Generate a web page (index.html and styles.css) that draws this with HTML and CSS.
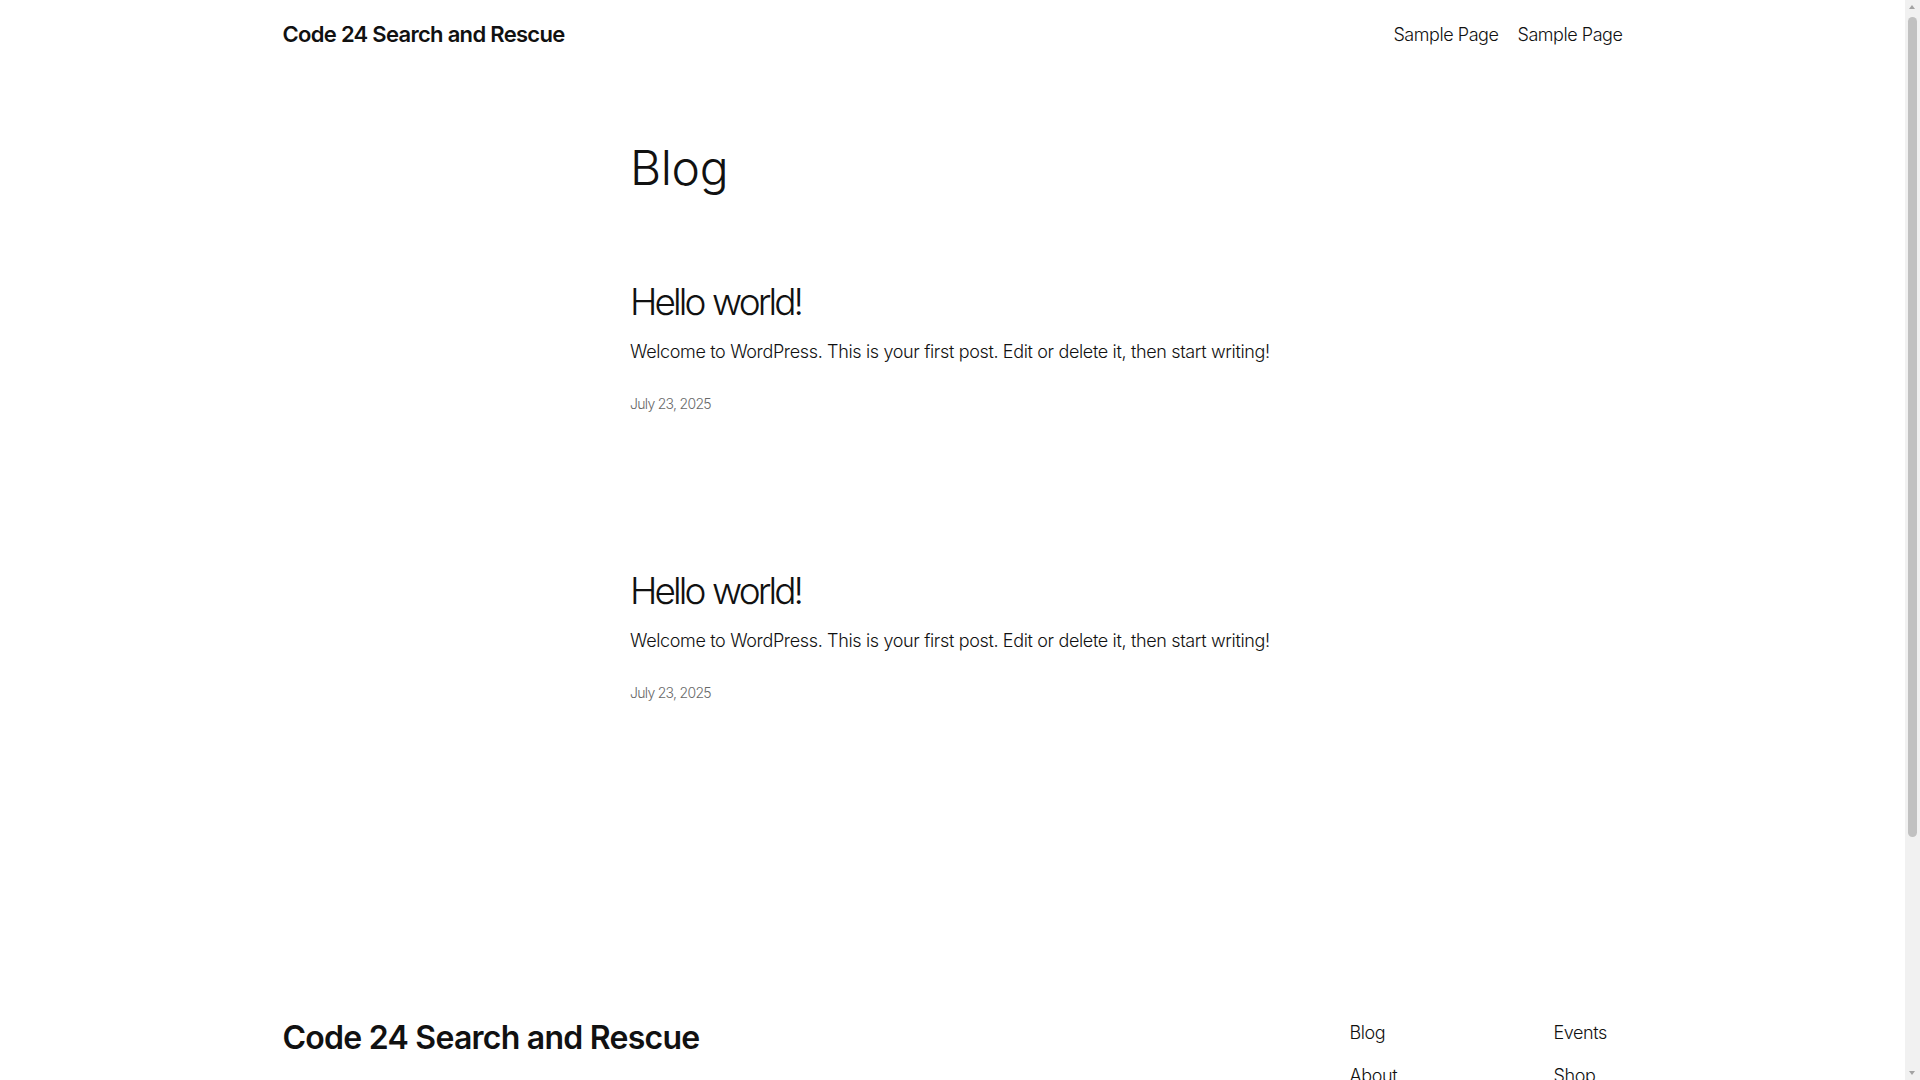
FILE: index.html
```html
<!DOCTYPE html>
<html lang="en">
<head>
<meta charset="utf-8">
<title>Blog – Code 24 Search and Rescue</title>
<link rel="stylesheet" href="styles.css">
</head>
<body>
<div class="page">
  <header class="site-header">
    <a class="site-title" href="#">Code 24 Search and Rescue</a>
    <nav class="site-nav">
      <a href="#">Sample Page</a>
      <a href="#">Sample Page</a>
    </nav>
  </header>

  <main class="content">
    <h1 class="page-title">Blog</h1>

    <article class="post">
      <h2 class="post-title"><a href="#">Hello world!</a></h2>
      <p class="post-excerpt">Welcome to WordPress. This is your first post. Edit or delete it, then start writing!</p>
      <time class="post-date">July 23, 2025</time>
    </article>

    <article class="post">
      <h2 class="post-title"><a href="#">Hello world!</a></h2>
      <p class="post-excerpt">Welcome to WordPress. This is your first post. Edit or delete it, then start writing!</p>
      <time class="post-date">July 23, 2025</time>
    </article>
  </main>

  <footer class="site-footer">
    <div class="footer-top">
      <div class="footer-brand">
        <a class="footer-title" href="#">Code 24 Search and Rescue</a>
      </div>
      <div class="footer-navs">
        <ul class="footer-nav">
          <li><a href="#">Blog</a></li>
          <li><a href="#">About</a></li>
          <li><a href="#">FAQs</a></li>
          <li><a href="#">Authors</a></li>
        </ul>
        <ul class="footer-nav">
          <li><a href="#">Events</a></li>
          <li><a href="#">Shop</a></li>
          <li><a href="#">Patterns</a></li>
          <li><a href="#">Themes</a></li>
        </ul>
      </div>
    </div>
    <div class="footer-bottom">
      <span>Twenty Twenty-Five</span>
      <span>Designed with WordPress</span>
    </div>
  </footer>
</div>

<div class="scrollbar" aria-hidden="true">
  <span class="sb-arrow sb-up"></span>
  <span class="sb-thumb"></span>
  <span class="sb-arrow sb-down"></span>
</div>
</body>
</html>
```

FILE: styles.css
```css
* { box-sizing: border-box; }

html, body {
  margin: 0;
  padding: 0;
  background: #ffffff;
}

body {
  font-family: Inter, "Noto Sans", Roboto, sans-serif;
  color: #111111;
  font-weight: 300;
}

.page {
  margin-right: 15px;
}

a {
  color: inherit;
  text-decoration: none;
}

.site-header {
  max-width: 1340px;
  margin: 0 auto;
  height: 68px;
  display: flex;
  align-items: center;
  justify-content: space-between;
}

.site-title {
  font-size: 22px;
  font-weight: 600;
  letter-spacing: -0.7px;
}

.site-nav {
  display: flex;
  gap: 19px;
  font-size: 18px;
  letter-spacing: -0.45px;
}

.content {
  width: 645px;
  margin: 0 auto;
}

.page-title {
  margin: 72px 0 0;
  font-size: 48px;
  line-height: 55px;
  font-weight: 300;
  letter-spacing: -0.4px;
}

.post {
  display: flex;
  flex-direction: column;
}

.post:first-of-type { margin-top: 83px; }
.post + .post { margin-top: 153px; }

.post-title {
  margin: 0;
  font-size: 37px;
  line-height: 48px;
  font-weight: 300;
  letter-spacing: -2.9px;
  word-spacing: 1px;
}

.post-excerpt {
  margin: 11px 0 0;
  font-size: 18px;
  line-height: 29px;
  letter-spacing: -0.35px;
}

.post-date {
  margin-top: 27px;
  font-size: 14px;
  line-height: 21px;
  color: #686868;
  letter-spacing: -0.7px;
}

.site-footer {
  max-width: 1340px;
  margin: 316px auto 0;
  padding-bottom: 60px;
}

.footer-top {
  display: flex;
  justify-content: space-between;
  align-items: flex-start;
}

.footer-title {
  font-size: 32px;
  line-height: 38px;
  font-weight: 600;
  letter-spacing: -0.75px;
}

.footer-navs {
  display: grid;
  grid-template-columns: 204px 69px;
}

.footer-nav {
  list-style: none;
  margin: 0;
  padding: 0;
  display: flex;
  flex-direction: column;
  gap: 16px;
  font-size: 18px;
  line-height: 27px;
  letter-spacing: -0.4px;
}

.footer-bottom {
  margin-top: 80px;
  display: flex;
  justify-content: space-between;
  font-size: 15px;
  color: #111111;
}

.scrollbar {
  position: fixed;
  top: 0;
  right: 0;
  bottom: 0;
  width: 15px;
  background: #f1f1f1;
  display: flex;
  flex-direction: column;
  align-items: center;
}

.sb-arrow {
  width: 15px;
  height: 15px;
  flex: none;
  position: relative;
}

.sb-arrow::after {
  content: "";
  position: absolute;
  left: 4px;
  width: 0;
  height: 0;
  border-left: 3.5px solid transparent;
  border-right: 3.5px solid transparent;
}

.sb-up::after {
  top: 5px;
  border-bottom: 4px solid #a3a3a3;
}

.sb-down::after {
  top: 6px;
  border-top: 4px solid #a3a3a3;
}

.sb-thumb {
  width: 9px;
  height: 820px;
  margin-top: 2px;
  border-radius: 5px;
  background: #c1c1c1;
  flex: none;
}

.sb-down {
  margin-top: auto;
}
```
